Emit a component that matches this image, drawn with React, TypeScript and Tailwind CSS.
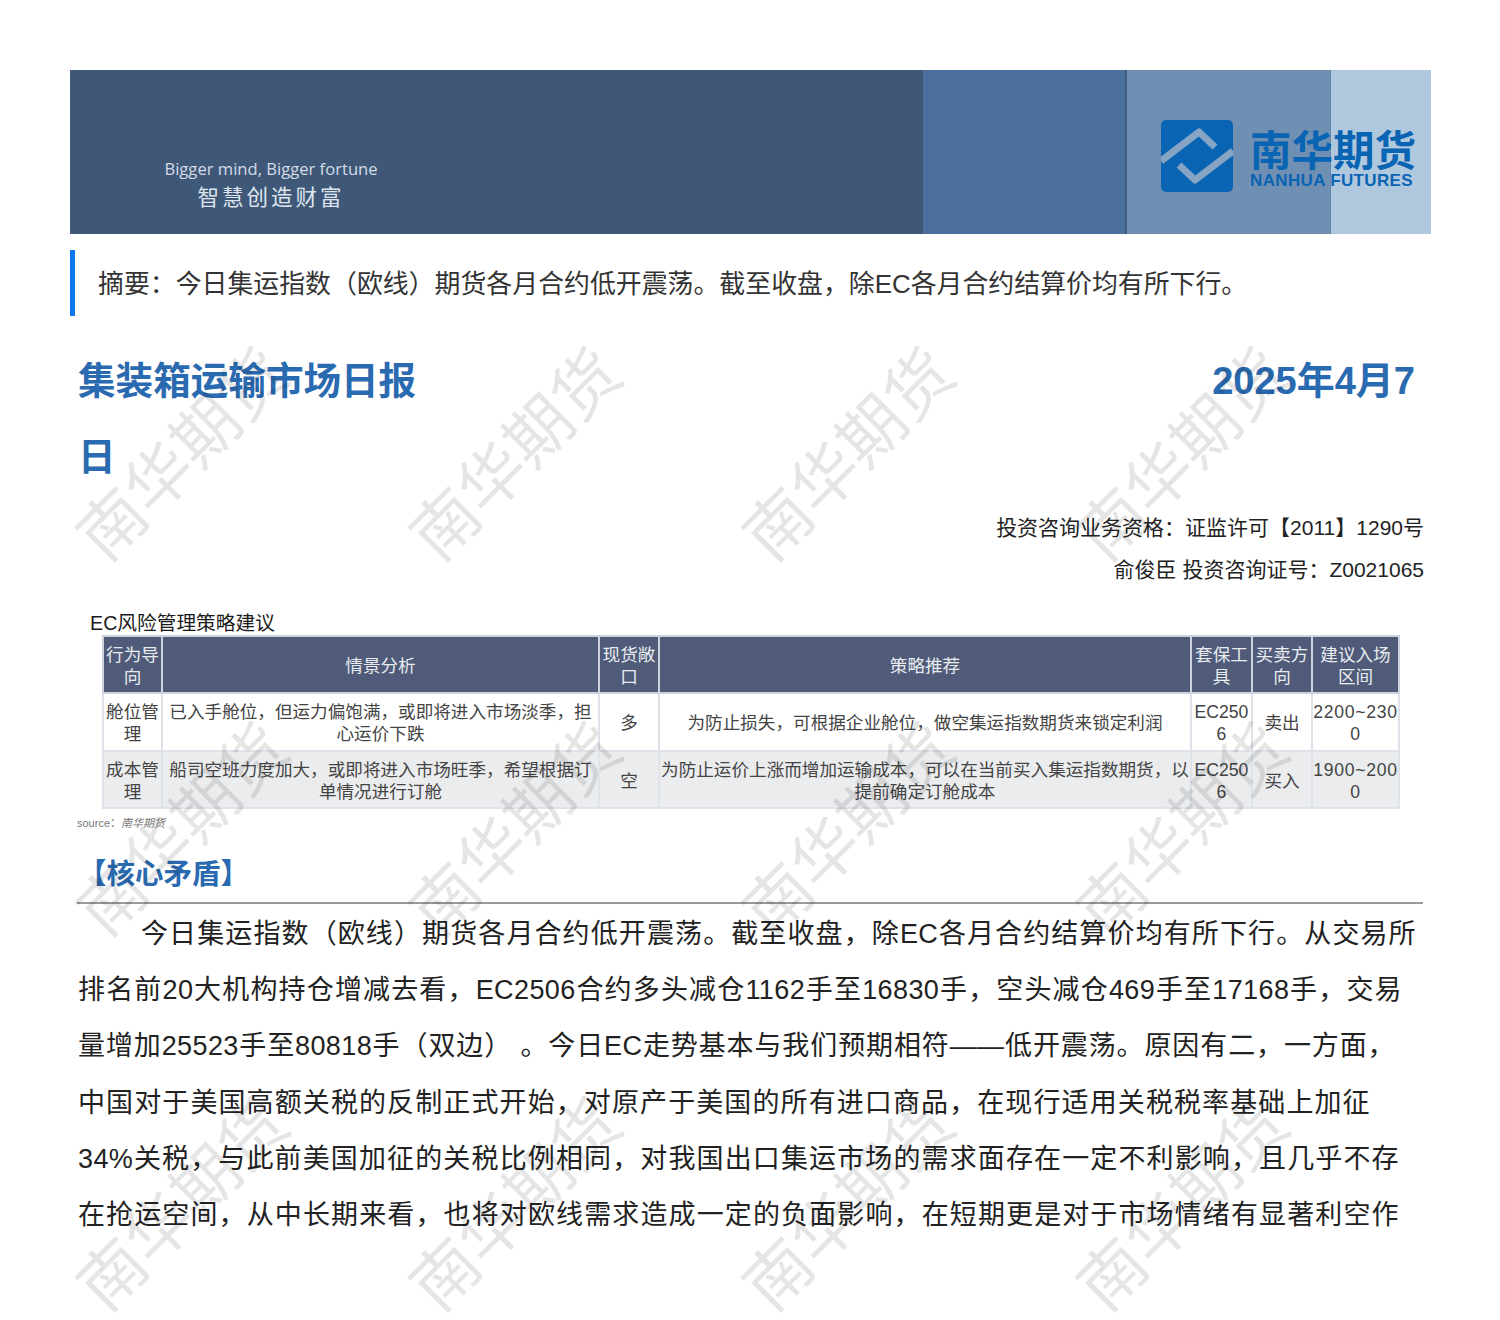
import React from "react";

const cjk = "font-['Liberation_Sans','Noto_Sans_CJK_SC',sans-serif]";

const marks: { x: number; y: number }[] = [];
for (const y of [455, 830, 1205]) {
  for (const x of [183, 516, 849, 1183]) marks.push({ x, y });
}

const th = "border-2 border-[#ccd3de] bg-[#4f5b78] px-0 pt-[2px] pb-0 font-normal text-[#e8ebf0] text-center align-middle";
const td = "border-2 border-[#dfe3e9] px-0 pt-[2px] pb-0 text-center align-middle";

const rows = [
  {
    shade: false,
    cells: ["舱位管理", "已入手舱位，但运力偏饱满，或即将进入市场淡季，担心运价下跌", "多", "为防止损失，可根据企业舱位，做空集运指数期货来锁定利润", "EC2506", "卖出", "2200~2300"],
  },
  {
    shade: true,
    cells: ["成本管理", "船司空班力度加大，或即将进入市场旺季，希望根据订单情况进行订舱", "空", "为防止运价上涨而增加运输成本，可以在当前买入集运指数期货，以提前确定订舱成本", "EC2506", "买入", "1900~2000"],
  },
];

export default function App() {
  return (
    <div className={`relative w-[1500px] h-[1320px] overflow-hidden bg-white pt-[70px] ${cjk}`}>
      <div className="relative ml-[70px] flex h-[164px] w-[1361px]">
        <div className="h-full w-[853px] bg-[#3f5878] pl-[90px] pt-[88px]">
          <div className="w-[222px] whitespace-nowrap text-center font-['Open_Sans','Noto_Sans_CJK_SC',sans-serif] text-[16.6px] leading-[22px] text-[#d3dbe6]">Bigger mind, Bigger fortune</div>
          <div className="mt-[4px] w-[222px] text-center text-[21.5px] leading-[28px] tracking-[3px] text-[#dfe5ee]">智慧创造财富</div>
        </div>
        <div className="h-full w-[204px] border-r-2 border-[#3f5d80] bg-[#4a6f9c]" />
        <div className="h-full w-[203px] bg-[#6f90b2]" />
        <div className="h-full w-[101px] border-l border-[#5f86ad] bg-[#b0c8de]" />
        <div className="absolute left-[1091px] top-[50px] flex items-start gap-[17px]">
          <svg width="72" height="72" viewBox="0 0 72 72" className="shrink-0">
            <rect x="0" y="0" width="72" height="72" rx="5" fill="#0a64b4" />
            <path d="M0 41 L38 12 L54 27" fill="none" stroke="#86a5c4" strokeWidth="7" strokeLinejoin="round" />
            <path d="M72 31 L34 60 L18 45" fill="none" stroke="#86a5c4" strokeWidth="7" strokeLinejoin="round" />
          </svg>
          <div className="pt-[9px] text-[#0a64b4]">
            <div className="whitespace-nowrap text-[41.5px] font-bold leading-[46px]">南华期货</div>
            <div className="mt-[-3px] whitespace-nowrap text-[17px] font-bold leading-[18px] tracking-[0.35px]">NANHUA FUTURES</div>
          </div>
        </div>
      </div>

      <div className="ml-[70px] mt-[16px] flex h-[66px] w-[1361px] items-center border-l-[5px] border-[#0a78f0] pl-[23px] pt-[2px] text-[25.9px] text-[#333333]">
        <span className="whitespace-nowrap">摘要：今日集运指数（欧线）期货各月合约低开震荡。截至收盘，除EC各月合约结算价均有所下行。</span>
      </div>

      <div className="ml-[78px] mt-[27px] w-[1337px] text-[37.6px] font-bold leading-[76px] text-[#2a6ab0]">
        <div className="flex justify-between">
          <span>集装箱运输市场日报</span>
          <span className="text-[38px]">2025年4月7</span>
        </div>
        <div>日</div>
      </div>

      <div className="mt-[12px] w-[1424px] text-right text-[21px] leading-[42px] text-[#222222]">
        <div>投资咨询业务资格：证监许可【2011】1290号</div>
        <div>俞俊臣 投资咨询证号：Z0021065</div>
      </div>

      <div className="ml-[90px] mt-[20px] text-[19.7px] leading-[24px] text-[#1a1a1a]">EC风险管理策略建议</div>

      <table className="ml-[102px] w-[1296px] table-fixed border-collapse text-[17.6px] leading-[22px] text-[#444444]">
        <colgroup>
          <col className="w-[59px]" />
          <col className="w-[437px]" />
          <col className="w-[60px]" />
          <col className="w-[532px]" />
          <col className="w-[61px]" />
          <col className="w-[60px]" />
          <col className="w-[87px]" />
        </colgroup>
        <thead>
          <tr className="h-[57px]">
            <th className={th}>行为导向</th>
            <th className={th}>情景分析</th>
            <th className={th}>现货敞口</th>
            <th className={th}>策略推荐</th>
            <th className={th}>套保工具</th>
            <th className={th}>买卖方向</th>
            <th className={th}>建议入场区间</th>
          </tr>
        </thead>
        <tbody>
          {rows.map((r) => (
            <tr key={r.cells[0]} className={r.shade ? "h-[57px] bg-[#ebecee]" : "h-[58px] bg-white"}>
              {r.cells.map((c, i) => (
                <td key={i} className={`${td} ${i === 1 || i === 3 ? "" : "break-all"} ${i === 6 ? "tracking-[0.7px]" : ""}`}>{c}</td>
              ))}
            </tr>
          ))}
        </tbody>
      </table>

      <div className="ml-[77px] mt-[7px] text-[11px] leading-[14px] text-[#777777]">
        source：<i>南华期货</i>
      </div>

      <div className="ml-[78px] mt-[24px] text-[28.5px] font-bold leading-[40px] text-[#2a6ab0]">【核心矛盾】</div>

      <div className="ml-[77px] mt-[8px] h-[2px] w-[1346px] bg-[#9a9a9a]" />

      <div className="ml-[78px] mt-[2px] text-[27px] leading-[56.2px] tracking-[0.4px] text-[#222222]">
        <div className="w-[1338px] pl-[63px] [text-align-last:justify]">今日集运指数（欧线）期货各月合约低开震荡。截至收盘，除EC各月合约结算价均有所下行。从交易所</div>
        <div className="w-[1324px] [text-align-last:justify]">排名前20大机构持仓增减去看，EC2506合约多头减仓1162手至16830手，空头减仓469手至17168手，交易</div>
        <div className="w-[1317px] [text-align-last:justify]">量增加25523手至80818手（双边）&nbsp;。今日EC走势基本与我们预期相符——低开震荡。原因有二，一方面，</div>
        <div className="w-[1292px] [text-align-last:justify]">中国对于美国高额关税的反制正式开始，对原产于美国的所有进口商品，在现行适用关税税率基础上加征</div>
        <div className="w-[1321px] [text-align-last:justify]">34%关税，与此前美国加征的关税比例相同，对我国出口集运市场的需求面存在一定不利影响，且几乎不存</div>
        <div className="w-[1321px] [text-align-last:justify]">在抢运空间，从中长期来看，也将对欧线需求造成一定的负面影响，在短期更是对于市场情绪有显著利空作</div>
      </div>

      {marks.map((m) => (
        <div
          key={`${m.x}-${m.y}`}
          className="pointer-events-none absolute -translate-x-1/2 -translate-y-1/2 -rotate-45 whitespace-nowrap text-[66px] leading-none text-black/10"
          style={{ left: m.x, top: m.y }}
        >
          南华期货
        </div>
      ))}
    </div>
  );
}
